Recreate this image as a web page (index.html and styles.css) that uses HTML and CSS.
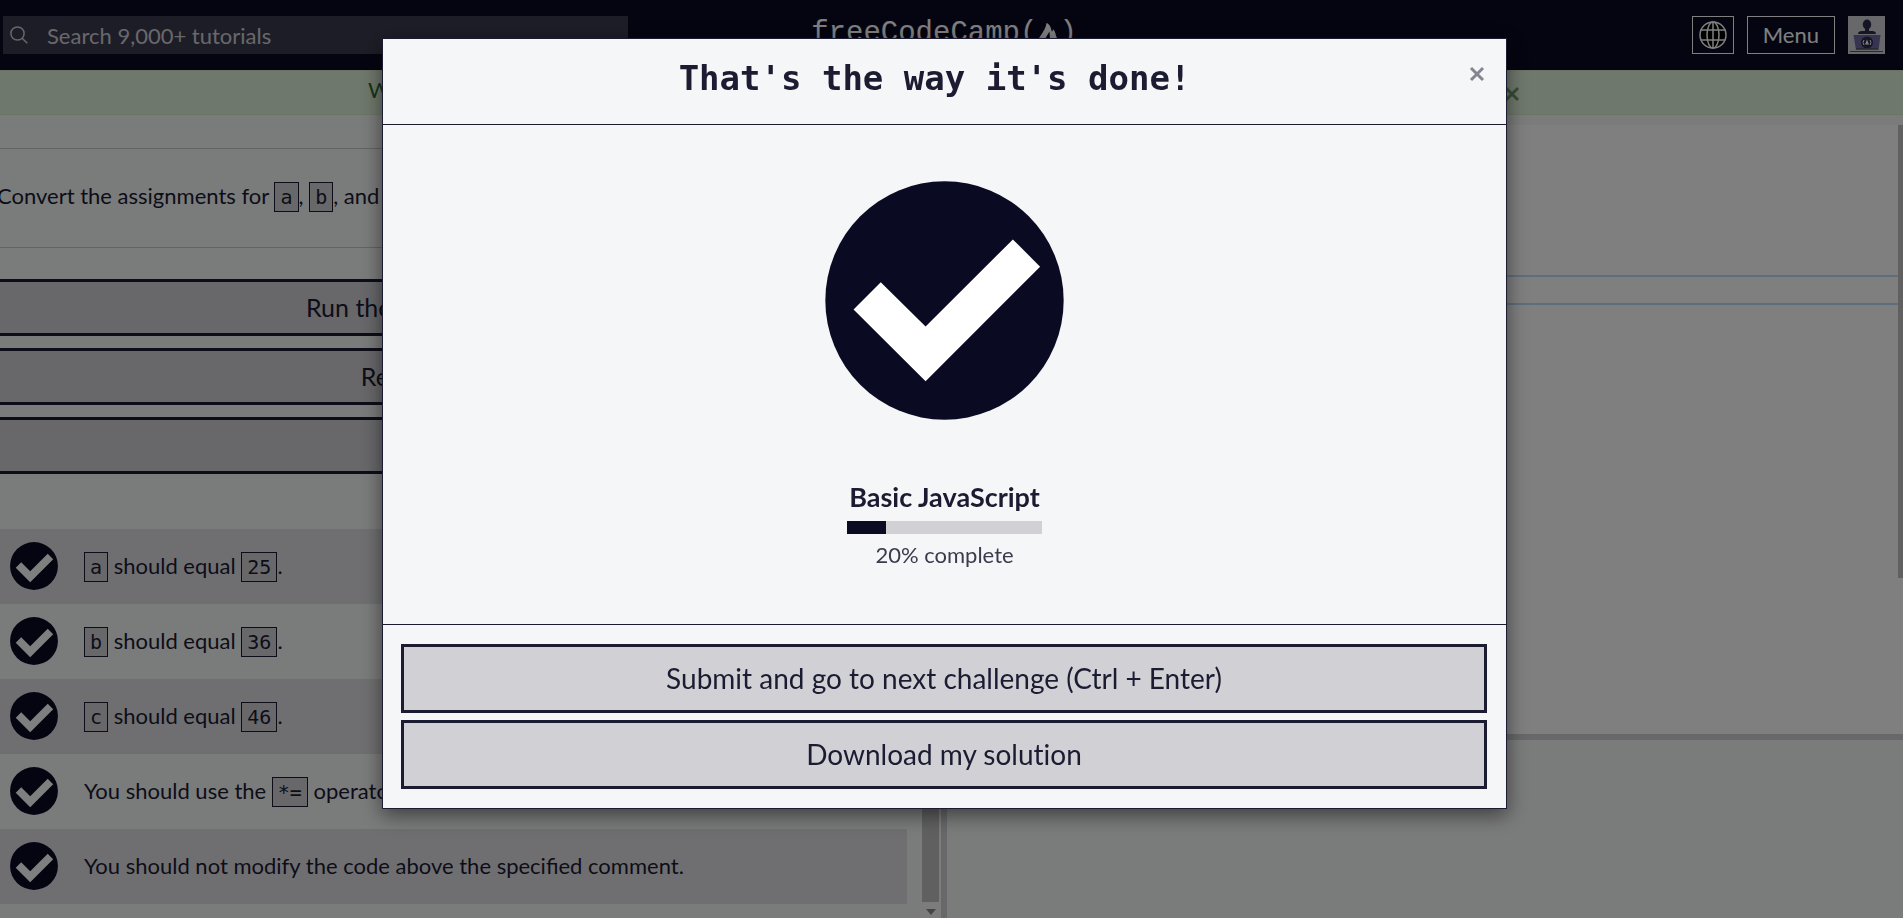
FILE: index.html
```html
<!DOCTYPE html>
<html lang="en">
<head>
<meta charset="utf-8">
<title>Basic JavaScript | freeCodeCamp</title>
<link rel="stylesheet" href="styles.css">
</head>
<body>
<svg class="sprite" aria-hidden="true">
  <symbol id="pass" viewBox="0 0 720 720">
    <circle cx="360" cy="360" r="359" fill="#0a0a23"/>
    <path d="M168 305 303 438 566 176 648 258 303 603 86 387Z" fill="#fff"/>
  </symbol>
</svg>
<div class="page">
  <header class="site-header">
    <form class="search" role="search">
      <svg class="search-icon" viewBox="0 0 18 18" aria-hidden="true"><circle cx="7.5" cy="7.5" r="6.6"/><path d="M12.2 12.2 17.3 17.3"/></svg>
      <input class="search-input" type="search" placeholder="Search 9,000+ tutorials" aria-label="Search">
    </form>
    <a class="logo" href="#">freeCodeCamp(<svg class="flame" viewBox="0 0 20 24" aria-hidden="true"><path d="M8.500 0C11 1 12 2.500 12.800 5L13.800 8.500C14.800 8.500 15 7.500 14.800 6C17 8 17.500 10 18 13C19.500 15 19.500 17 19 19C18 22 16 23.500 13 24C15.500 21 15 18 12 16L11.500 8.500L7 16C4.500 19 5.500 22 7.500 24C3 23 0 20 0.500 16.500C2 12 7.500 8 8.500 0Z"/></svg>)</a>
    <nav class="header-nav">
      <button class="nav-button nav-globe" type="button" aria-label="Change language">
        <svg class="globe" viewBox="0 0 28 28" aria-hidden="true"><circle cx="14" cy="14" r="13" fill="#000"/><ellipse cx="14" cy="14" rx="6" ry="13"/><path d="M14 1V27M1.500 9H26.500M1.500 19H26.500"/></svg>
      </button>
      <button class="nav-button nav-menu" type="button">Menu</button>
      <a class="avatar" href="#" aria-label="Profile">
        <svg viewBox="0 0 37 38" aria-hidden="true">
          <ellipse cx="19" cy="8.500" rx="4.200" ry="5"/><path d="M17 12h4v3h3q4 0 4 3H10q0-3 4-3h3Z"/>
          <path d="M5.500 19h27l-2 15H8Z" fill="#6b6ba5"/><circle cx="19" cy="26.500" r="6"/>
          <path d="M16 24q-2 2.500 0 5M22 24q2 2.500 0 5" fill="none" stroke="#fff"/><path d="m19 23.500 2 5h-4Z" fill="#fff"/>
          <path d="M8 32.500h22M2 35.500h33" fill="none" stroke="#55556b"/>
        </svg>
      </a>
    </nav>
  </header>
  <div class="flash" role="status">
    <div class="flash-inner">
      <span>Welcome back!</span>
      <button class="close flash-close" type="button" aria-label="Dismiss"><svg class="close-icon" viewBox="0 0 16 16" aria-hidden="true"><path d="M2 2 14 14M14 2 2 14"/></svg></button>
    </div>
  </div>
  <main class="workspace">
    <section class="instructions">
      <div class="instructions-content">
        <p class="description">Convert the assignments for <code>a</code>, <code>b</code>, and <code>c</code> to use the <code>*=</code> operator.</p>
        <div class="actions">
          <button class="tool-button" type="button">Run the Tests (Ctrl + Enter)</button>
          <button class="tool-button" type="button">Reset this lesson</button>
          <button class="tool-button" type="button">Get Help</button>
        </div>
        <ul class="tests">
          <li class="test"><svg class="test-icon" aria-hidden="true"><use href="#pass"/></svg><span><code>a</code> should equal <code>25</code>.</span></li>
          <li class="test"><svg class="test-icon" aria-hidden="true"><use href="#pass"/></svg><span><code>b</code> should equal <code>36</code>.</span></li>
          <li class="test"><svg class="test-icon" aria-hidden="true"><use href="#pass"/></svg><span><code>c</code> should equal <code>46</code>.</span></li>
          <li class="test"><svg class="test-icon" aria-hidden="true"><use href="#pass"/></svg><span>You should use the <code>*=</code> operator for each.</span></li>
          <li class="test"><svg class="test-icon" aria-hidden="true"><use href="#pass"/></svg><span>You should not modify the code above the specified comment.</span></li>
        </ul>
      </div>
      <div class="scrollbar" aria-hidden="true">
        <div class="scrollbar-thumb"></div>
        <svg class="scrollbar-arrow" viewBox="0 0 10 6"><path d="M0 0h10L5 6Z"/></svg>
      </div>
    </section>
    <div class="divider"></div>
    <section class="code-pane">
      <div class="editor">
        <div class="editor-lines"><div class="current-line"></div></div>
        <div class="editor-scroll"></div>
      </div>
      <div class="divider"></div>
      <div class="console"></div>
    </section>
  </main>
</div>
<div class="backdrop">
  <div class="modal" role="dialog" aria-modal="true" aria-labelledby="modal-title">
    <div class="modal-header">
      <h2 class="modal-title" id="modal-title">That's the way it's done!</h2>
      <button class="close" type="button" aria-label="Close"><svg class="close-icon" viewBox="0 0 16 16" aria-hidden="true"><path d="M2 2 14 14M14 2 2 14"/></svg></button>
    </div>
    <div class="modal-body">
      <svg class="modal-check" role="img" aria-label="Passed"><use href="#pass"/></svg>
      <div class="completion">
        <h3 class="block-name">Basic JavaScript</h3>
        <div class="progress"><div class="progress-fill" style="width:20%"></div></div>
        <p class="progress-text">20% complete</p>
      </div>
    </div>
    <div class="modal-footer">
      <button class="modal-button" type="button">Submit and go to next challenge (Ctrl + Enter)</button>
      <button class="modal-button" type="button">Download my solution</button>
    </div>
  </div>
</div>
</body>
</html>
```
FILE: styles.css
```css
* { box-sizing: border-box; }
body {
  margin: 0;
  font-family: Lato, sans-serif;
  font-size: 22px;
  line-height: 34px;
  color: #1b1b32;
  background: #f5f6f7;
}
button, input { font: inherit; color: inherit; }
button { cursor: pointer; }
.sprite { position: absolute; width: 0; height: 0; }
.page { height: 100vh; display: flex; flex-direction: column; overflow: hidden; }

.site-header {
  flex: none;
  display: grid;
  grid-template-columns: 1fr auto 1fr;
  align-items: center;
  height: 70px;
  padding: 0 18px 0 3px;
  background: #0a0a23;
  color: #fff;
}
.search {
  display: flex;
  align-items: center;
  gap: 19px;
  width: 625px;
  height: 38px;
  padding-left: 7px;
  background: #3b3b4f;
}
.search-icon { flex: none; width: 18px; height: 18px; fill: none; stroke: #d0d0d5; stroke-width: 1.5; }
.search-input { flex: 1; height: 38px; padding: 0; border: 0; outline: 0; background: none; color: #fff; }
.search-input::placeholder { color: #d0d0d5; opacity: 1; }
.logo {
  display: flex;
  align-items: center;
  padding-bottom: 3px;
  color: #fff;
  font-family: "Liberation Mono", monospace;
  font-size: 29px;
  text-decoration: none;
}
.flame { width: 20px; height: 24px; margin: 2px 1px 0; fill: #fff; }
.header-nav { display: flex; justify-content: flex-end; gap: 13px; }
.nav-button {
  height: 38px;
  display: flex;
  align-items: center;
  padding: 0 15px;
  border: 1px solid #fff;
  background: none;
}
.nav-globe { padding: 0 6px; }
.globe { width: 28px; height: 28px; fill: none; stroke: #fff; stroke-width: 1.5; }
.avatar { width: 37px; height: 38px; background: #d0d0d5; fill: #2a2a4a; }
.avatar svg { display: block; }

.flash {
  flex: none;
  height: 45px;
  padding-right: 15px;
  border: solid #d6e9c6;
  border-width: 1px 0;
  background: #dff0d8;
  color: #2f6b30;
}
.flash-inner {
  display: flex;
  justify-content: space-between;
  max-width: 1152px;
  margin: 0 auto;
  padding-top: 2px;
}
.close { padding: 0; border: 0; background: none; color: #858591; }
.close-icon { display: block; width: 16px; height: 16px; stroke: currentColor; stroke-width: 3; }
.flash-close { padding-top: 13px; color: #6f9a70; align-self: flex-start; }

.workspace {
  flex: 1;
  min-height: 0;
  display: grid;
  grid-template-columns: minmax(0, 941fr) 6px minmax(0, 956fr);
}
.divider { background: #d0d0d5; }
.instructions { display: flex; min-height: 0; overflow: hidden; }
.instructions-content { flex: 1; margin: 33px 13px 0 -3px; }
.description {
  margin: 0;
  padding: 30px 0 34px;
  border: solid #c4c6c8;
  border-width: 1px 0;
}
code {
  padding: 2px 5px;
  border: 1px solid #1b1b32;
  background: #d0d0d5;
  font-family: "DejaVu Sans Mono", monospace;
  font-size: 20px;
  line-height: 1;
}
.actions { display: grid; gap: 12px; margin-top: 31px; }
.tool-button {
  height: 57px;
  padding: 0 0 2px;
  border: 3px solid #1b1b32;
  background: #d0d0d5;
  font-size: 25px;
}
.tests { margin: 55px 0 0; padding: 0; list-style: none; }
.test { display: flex; align-items: center; gap: 26px; height: 75px; padding: 0 0 2px 13px; }
.test:nth-child(odd) { background: #dfdfe2; }
.test-icon { width: 48px; height: 48px; }
.scrollbar {
  flex: none;
  width: 21px;
  padding: 0 2px;
  display: flex;
  flex-direction: column;
  align-items: center;
  gap: 7px;
  background: #f9f9f9;
}
.scrollbar-thumb { width: 17px; flex: 1; background: #c1c1c1; }
.scrollbar-arrow { width: 10px; height: 6px; margin-bottom: 3px; fill: #8b8b8b; }
.code-pane { display: flex; flex-direction: column; min-height: 0; padding-top: 10px; }
.editor { flex: 609; display: flex; background: #fff; }
.editor-lines { flex: 1; padding-top: 150px; }
.current-line { height: 30px; border: solid #bcdcf8; border-width: 2px 0; }
.editor-scroll { width: 5px; height: 453px; background: #c1c1c1; }
.code-pane .divider { height: 6px; }
.console { flex: 178; }

.backdrop {
  position: fixed;
  inset: 0;
  padding: 38px 14px 0 0;
  background: rgba(0, 0, 0, .5);
  overflow: hidden;
}
.modal {
  max-width: 1125px;
  margin: 0 auto;
  border: 1px solid #1b1b32;
  background: #f5f6f7;
  box-shadow: 0 6px 19px rgba(0, 0, 0, .5);
}
.modal-header {
  display: flex;
  align-items: flex-start;
  gap: 4px;
  padding: 17px 21px 23px;
  border-bottom: 1px solid #1b1b32;
}
.modal-title {
  flex: 1;
  margin: 0;
  font-family: "DejaVu Sans Mono", monospace;
  font-size: 34px;
  line-height: 45px;
  text-align: center;
}
.modal-header .close { padding-top: 10px; }
.modal-body { display: flex; flex-direction: column; align-items: center; padding: 56px 19px 52px; }
.modal-check { width: 239px; height: 239px; }
.completion { margin-top: 60px; text-align: center; }
.block-name { margin: 0; padding: 0 2px; font-size: 27px; line-height: 34px; }
.progress { height: 13px; margin-top: 7px; background: #d0d0d5; }
.progress-fill { height: 13px; background: #0a0a23; }
.progress-text { margin: 4px 0 0; color: #3b3b4f; }
.modal-footer { display: grid; gap: 7px; padding: 19px 19px 19px 18px; border-top: 1px solid #1b1b32; }
.modal-button {
  height: 69px;
  padding: 0 0 2px;
  border: 3px solid #1b1b32;
  background: #d0d0d5;
  font-size: 28px;
  font-variant-ligatures: none;
}
```
